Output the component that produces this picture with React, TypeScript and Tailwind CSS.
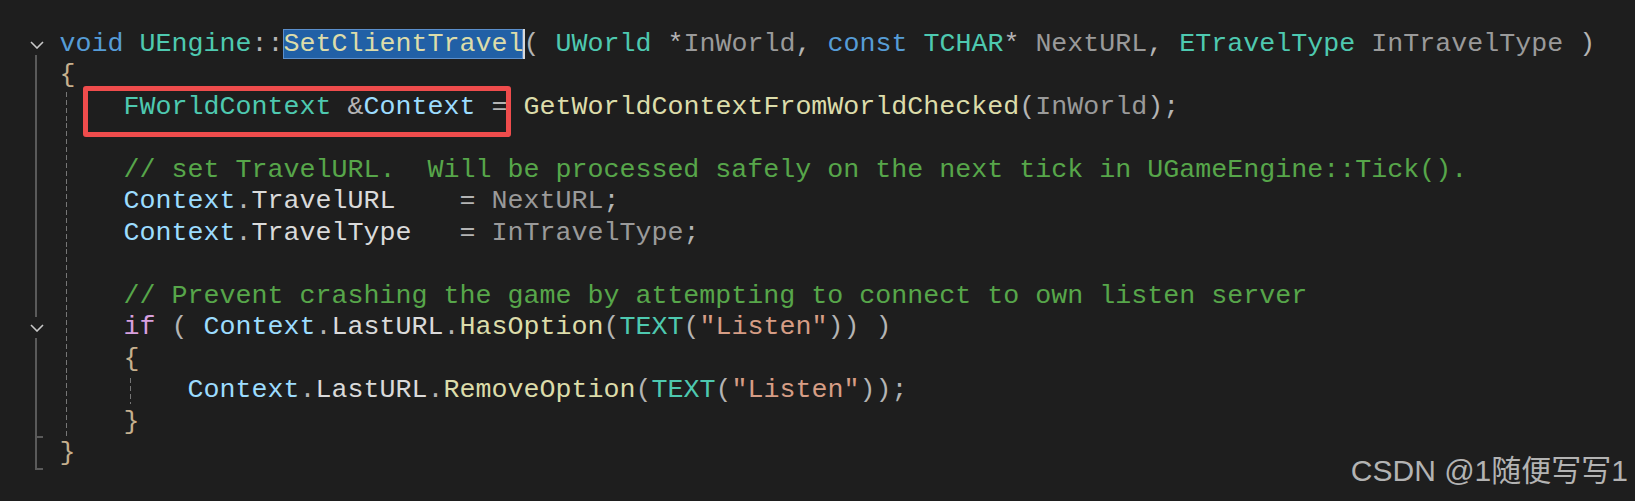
import React from 'react'

const kw = 'text-[#569cd6]'
const ty = 'text-[#4ec9b0]'
const fn = 'text-[#dcdcaa]'
const pa = 'text-[#9a9a9a]'
const pu = 'text-[#b4b4b4]'
const lo = 'text-[#9cdcfe]'
const me = 'text-[#dadada]'
const cm = 'text-[#57a64a]'
const ct = 'text-[#d8a0df]'
const st = 'text-[#d69d85]'
const br = 'text-[#c6b08e]'
const ma = 'text-[#4ec9b0]'

type Tok = [string, string] | 'SEL'
type Gutter = 'start' | 'line' | 'fold' | 'end'

type Row = {
  gutter: Gutter
  guides: number
  tokens: Tok[]
}

const rows: Row[] = [
  {
    gutter: 'start',
    guides: 0,
    tokens: [
      ['void', kw], [' ', pu], ['UEngine', ty], ['::', pu], 'SEL', ['( ', pu],
      ['UWorld', ty], [' *', pu], ['InWorld', pa], [', ', pu], ['const', kw], [' ', pu],
      ['TCHAR', ty], ['* ', pu], ['NextURL', pa], [', ', pu], ['ETravelType', ty], [' ', pu],
      ['InTravelType', pa], [' )', pu],
    ],
  },
  { gutter: 'line', guides: 0, tokens: [['{', br]] },
  {
    gutter: 'line',
    guides: 1,
    tokens: [
      ['FWorldContext', ty], [' &', pu], ['Context', lo], [' = ', pu],
      ['GetWorldContextFromWorldChecked', fn], ['(', pu], ['InWorld', pa], [');', pu],
    ],
  },
  { gutter: 'line', guides: 1, tokens: [] },
  {
    gutter: 'line',
    guides: 1,
    tokens: [['// set TravelURL.  Will be processed safely on the next tick in UGameEngine::Tick().', cm]],
  },
  {
    gutter: 'line',
    guides: 1,
    tokens: [['Context', lo], ['.', pu], ['TravelURL', me], ['    = ', pu], ['NextURL', pa], [';', pu]],
  },
  {
    gutter: 'line',
    guides: 1,
    tokens: [['Context', lo], ['.', pu], ['TravelType', me], ['   = ', pu], ['InTravelType', pa], [';', pu]],
  },
  { gutter: 'line', guides: 1, tokens: [] },
  {
    gutter: 'line',
    guides: 1,
    tokens: [['// Prevent crashing the game by attempting to connect to own listen server', cm]],
  },
  {
    gutter: 'fold',
    guides: 1,
    tokens: [
      ['if', ct], [' ( ', pu], ['Context', lo], ['.', pu], ['LastURL', me], ['.', pu],
      ['HasOption', fn], ['(', pu], ['TEXT', ma], ['(', pu], ['"Listen"', st], [')) )', pu],
    ],
  },
  { gutter: 'line', guides: 1, tokens: [['{', br]] },
  {
    gutter: 'line',
    guides: 2,
    tokens: [
      ['Context', lo], ['.', pu], ['LastURL', me], ['.', pu], ['RemoveOption', fn], ['(', pu],
      ['TEXT', ma], ['(', pu], ['"Listen"', st], ['));', pu],
    ],
  },
  { gutter: 'end', guides: 1, tokens: [['}', br]] },
  { gutter: 'end', guides: 0, tokens: [['}', br]] },
]

function Chevron() {
  return (
    <svg width="14" height="8" viewBox="0 0 14 8" className="ml-[29.5px] shrink-0">
      <path d="M1 1 L7 7 L13 1" fill="none" stroke="#c8c8c8" strokeWidth="1.6" />
    </svg>
  )
}

function GutterCell({ kind }: { kind: Gutter }) {
  if (kind === 'start') {
    return (
      <div className="w-[59.5px] shrink-0 flex flex-col justify-between pt-[12px]">
        <Chevron />
        <div className="ml-[35px] w-[2px] h-[5px] bg-[#5a5a5a]" />
      </div>
    )
  }
  if (kind === 'fold') {
    return (
      <div className="w-[59.5px] shrink-0 flex flex-col justify-between">
        <div className="ml-[35px] w-[2px] h-[5px] bg-[#5a5a5a]" />
        <Chevron />
        <div className="ml-[35px] w-[2px] h-[5.5px] bg-[#5a5a5a]" />
      </div>
    )
  }
  if (kind === 'end') {
    return (
      <div className="w-[59.5px] shrink-0 flex">
        <div className="ml-[35px] w-[8px] h-full border-l-2 border-b-2 border-[#5a5a5a]" />
      </div>
    )
  }
  return (
    <div className="w-[59.5px] shrink-0 flex">
      <div className="ml-[35px] w-[2px] h-full bg-[#5a5a5a]" />
    </div>
  )
}

function IndentGuide({ short }: { short?: boolean }) {
  return (
    <div className={`w-[64px] shrink-0 flex pl-[6px] ${short ? 'py-[3px]' : ''}`}>
      <div className="w-[1.5px] h-full bg-[repeating-linear-gradient(to_bottom,#767676_0_5px,transparent_5px_8px)]" />
    </div>
  )
}

function CodeRow({ row }: { row: Row }) {
  return (
    <div className="flex h-[31.5px]">
      <GutterCell kind={row.gutter} />
      {row.guides >= 1 && <IndentGuide />}
      {row.guides >= 2 && <IndentGuide short />}
      <div className="whitespace-pre leading-[31.5px]">
        {row.tokens.map((t, i) =>
          t === 'SEL' ? (
            <span
              key={i}
              className="inline-block leading-[30px] bg-[#2160a6] text-[#dcdcaa] shadow-[inset_0_0_0_1px_#5b8fcc,2px_0_0_0_#d8d8d8]"
            >
              SetClientTravel
            </span>
          ) : (
            <span key={i} className={t[1]}>
              {t[0]}
            </span>
          )
        )}
      </div>
    </div>
  )
}

export default function App() {
  return (
    <div className="relative w-[1635px] h-[501px] overflow-hidden bg-[#1e1e1e]">
      <div className="flex flex-col pt-[28.5px] font-['Liberation_Mono',monospace] text-[26.667px]">
        {rows.map((row, i) => (
          <CodeRow key={i} row={row} />
        ))}
      </div>

      {/* annotation box */}
      <div className="absolute left-[83px] top-[86px] w-[428px] h-[51px] border-[5px] border-[#ef4c4c] rounded-[3px]" />

      <div className="absolute right-[7px] top-[455px] leading-[32px] text-[30px] text-[#b3b3b3] font-['Liberation_Sans','Noto_Sans_CJK_SC',sans-serif]">
        CSDN @1随便写写1
      </div>
    </div>
  )
}
